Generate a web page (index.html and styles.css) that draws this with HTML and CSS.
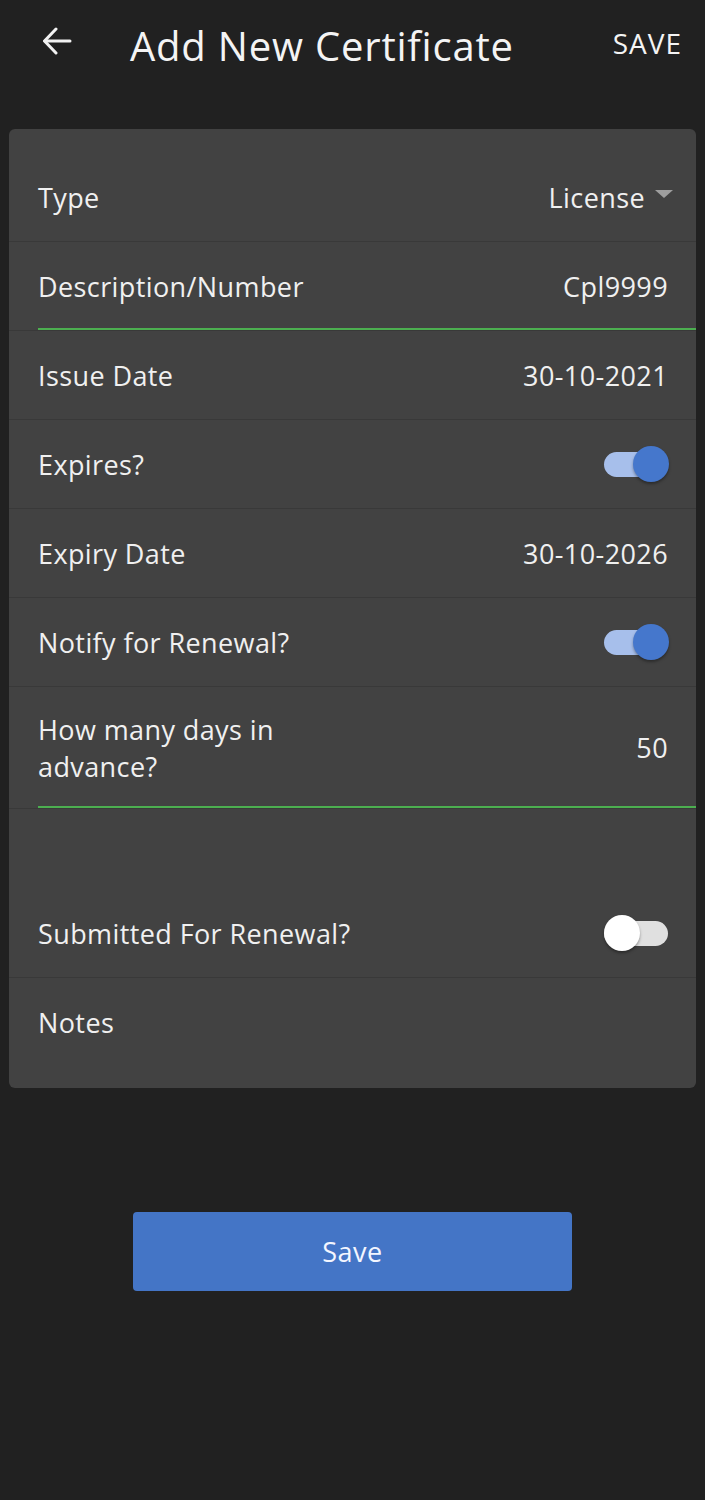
FILE: index.html
```html
<!DOCTYPE html>
<html>
<head>
<meta charset="utf-8">
<link rel="stylesheet" href="styles.css">
</head>
<body>
<div class="app">
  <header class="topbar">
    <button class="back" aria-label="Back">
      <svg width="30" height="28" viewBox="0 0 30 28" fill="none" stroke="#f2f2f2" stroke-width="3" stroke-linecap="round" stroke-linejoin="round">
        <path d="M28 14 H3"/>
        <path d="M14 2 L2.5 14 L14 26"/>
      </svg>
    </button>
    <h1 class="title">Add New Certificate</h1>
    <span class="action">SAVE</span>
  </header>

  <section class="card">
    <div class="row">
      <span class="label">Type</span>
      <span class="value dropdown">License<span class="caret"></span></span>
    </div>
    <div class="row field">
      <span class="label">Description/Number</span>
      <span class="value">Cpl9999</span>
    </div>
    <div class="row">
      <span class="label">Issue Date</span>
      <span class="value">30-10-2021</span>
    </div>
    <div class="row">
      <span class="label">Expires?</span>
      <span class="switch on"><span class="track"></span><span class="thumb"></span></span>
    </div>
    <div class="row">
      <span class="label">Expiry Date</span>
      <span class="value">30-10-2026</span>
    </div>
    <div class="row">
      <span class="label">Notify for Renewal?</span>
      <span class="switch on"><span class="track"></span><span class="thumb"></span></span>
    </div>
    <div class="row field tall">
      <span class="label multi">How many days in<br>advance?</span>
      <span class="value">50</span>
    </div>
    <div class="spacer"></div>
    <div class="row">
      <span class="label">Submitted For Renewal?</span>
      <span class="switch off"><span class="track"></span><span class="thumb"></span></span>
    </div>
    <div class="row last">
      <span class="label">Notes</span>
    </div>
  </section>

  <div class="actions">
    <button class="primary">Save</button>
  </div>
</div>
</body>
</html>
```

FILE: styles.css
```css
* { box-sizing: border-box; }
html, body { margin: 0; padding: 0; }
body {
  background: #212121;
  color: #f0f0f0;
  font-family: "Open Sans", "Noto Sans", "Liberation Sans", sans-serif;
  width: 705px;
  min-height: 1500px;
}
.app { display: flex; flex-direction: column; }

.topbar {
  height: 129px;
  display: flex;
  align-items: flex-start;
  padding-top: 27px;
}
.back {
  background: none;
  border: 0;
  padding: 0;
  margin-left: 42px;
  width: 30px;
  height: 28px;
  display: flex;
}
.title {
  margin: -5px 0 0 58px;
  font-size: 40px;
  font-weight: 400;
  line-height: 48px;
  color: #f4f4f4;
  letter-spacing: 0.8px;
  flex: 1;
}
.action {
  font-size: 28px;
  font-weight: 400;
  line-height: 34px;
  color: #f4f4f4;
  letter-spacing: 1px;
  margin: -1px 23px 0 0;
}

.card {
  margin: 0 9px;
  background: #424242;
  border-radius: 6px;
  padding: 24px 0 21px;
  display: flex;
  flex-direction: column;
}
.row {
  height: 89px;
  display: flex;
  align-items: center;
  justify-content: space-between;
  padding: 0 28px 0 29px;
  border-bottom: 1px solid #393939;
  position: relative;
  font-size: 27px;
  letter-spacing: 0.4px;
}
.row.last { border-bottom: 0; }
.row.field::after {
  content: "";
  position: absolute;
  left: 29px;
  right: 0;
  bottom: 0;
  height: 2px;
  background: #4caf50;
}
.row.tall { height: 122px; }
.label { line-height: 33px; color: #f0f0f0; }
.label.multi { line-height: 37px; }
.value { color: #f0f0f0; }
.dropdown {
  display: flex;
  align-items: center;
  margin-right: -5px;
}
.caret {
  width: 0; height: 0;
  border-left: 9px solid transparent;
  border-right: 9px solid transparent;
  border-top: 8px solid #9e9e9e;
  margin-left: 10px;
  margin-top: -6px;
}
.spacer { height: 80px; }

.switch {
  position: relative;
  width: 64px;
  height: 36px;
  display: block;
}
.switch .track {
  position: absolute;
  left: 0; right: 0;
  top: 6px;
  height: 25px;
  border-radius: 13px;
}
.switch .thumb {
  position: absolute;
  top: 0;
  width: 36px;
  height: 36px;
  border-radius: 50%;
  box-shadow: 0 2px 3px rgba(0,0,0,0.35);
}
.switch.on .track { background: #a7bfeb; }
.switch.on .thumb { background: #4577cc; right: -1px; }
.switch.off .track { background: #e0e0e0; }
.switch.off .thumb { background: #ffffff; left: 0; }

.actions {
  display: flex;
  justify-content: flex-start;
  padding: 124px 0 0 133px;
}
.primary {
  width: 439px;
  height: 79px;
  background: #4475c6;
  border: 0;
  border-radius: 4px;
  color: #f3f6ff;
  font-family: inherit;
  font-size: 27px;
  font-weight: 500;
  letter-spacing: 0.5px;
}
```
